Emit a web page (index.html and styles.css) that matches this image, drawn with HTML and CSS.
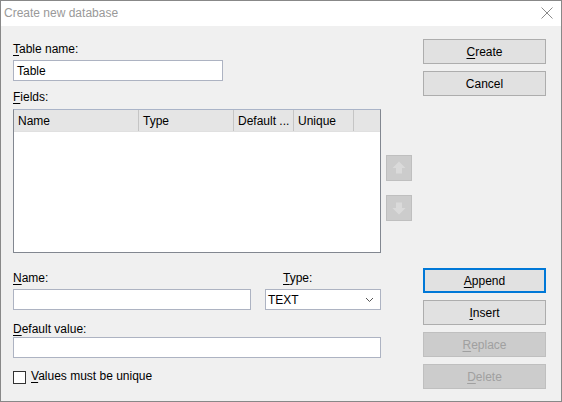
FILE: index.html
```html
<!DOCTYPE html>
<html>
<head>
<meta charset="utf-8">
<link rel="stylesheet" href="styles.css">
</head>
<body>
<div class="window">
  <div class="titlebar">
    <span class="title">Create new database</span>
    <svg class="close" width="12" height="12" viewBox="0 0 12 12"><path d="M0.5 0.5 L11.5 11.5 M11.5 0.5 L0.5 11.5" stroke="#8a8a8a" stroke-width="1" fill="none"/></svg>
  </div>
  <div class="body">
    <div class="left">
      <div class="lbl lbl-first"><u>T</u>able name:</div>
      <div class="input input-table">Table</div>
      <div class="lbl lbl-fields"><u>F</u>ields:</div>
      <div class="list-row">
        <div class="list">
          <div class="list-head">
            <div class="col c-name">Name</div>
            <div class="col c-type">Type</div>
            <div class="col c-def">Default ...</div>
            <div class="col c-uniq">Unique</div>
            <div class="col c-fill"></div>
          </div>
        </div>
        <div class="arrows">
          <div class="arrow-btn">
            <svg width="24" height="24" viewBox="0 0 24 24"><polygon points="12,5.5 18.5,12 15,12 15,17.5 9,17.5 9,12 5.5,12" fill="#dadada"/></svg>
          </div>
          <div class="arrow-btn arrow-down">
            <svg width="24" height="24" viewBox="0 0 24 24"><polygon points="12,18.5 18.5,12 15,12 15,6.5 9,6.5 9,12 5.5,12" fill="#dadada"/></svg>
          </div>
        </div>
      </div>
      <div class="field-row">
        <div class="field field-name">
          <div class="lbl"><u>N</u>ame:</div>
          <div class="input input-name"></div>
        </div>
        <div class="field field-type">
          <div class="lbl lbl-type"><u>T</u>ype:</div>
          <div class="select">
            <span>TEXT</span>
            <svg class="chev" width="9" height="6" viewBox="0 0 9 6"><path d="M1 1 L4.5 4.5 L8 1" stroke="#555" stroke-width="1" fill="none"/></svg>
          </div>
        </div>
      </div>
      <div class="lbl lbl-default"><u>D</u>efault value:</div>
      <div class="input input-default"></div>
      <div class="check-row">
        <span class="checkbox"></span>
        <span class="check-label"><u>V</u>alues must be unique</span>
      </div>
    </div>
    <div class="right">
      <div class="btn"><u>C</u>reate</div>
      <div class="btn">Cancel</div>
      <div class="btn btn-default btn-append"><u>A</u>ppend</div>
      <div class="btn"><u>I</u>nsert</div>
      <div class="btn btn-disabled"><u>R</u>eplace</div>
      <div class="btn btn-disabled"><u>D</u>elete</div>
    </div>
  </div>
</div>
</body>
</html>
```

FILE: styles.css
```css
* { box-sizing: border-box; }
html, body { margin: 0; padding: 0; }
body {
  font-family: "Liberation Sans", Arial, sans-serif;
  font-size: 12px;
  color: #000;
  background: #fff;
}
u { text-decoration: underline; text-underline-offset: 2px; text-decoration-thickness: 1px; }

.window {
  width: 562px;
  height: 402px;
  border: 1px solid #888;
  background: #f0f0f0;
  display: flex;
  flex-direction: column;
}
.titlebar {
  height: 25px;
  background: #fff;
  display: flex;
  align-items: center;
  justify-content: space-between;
  padding: 0 8px 1px 3px;
}
.title { color: #999; line-height: 15px; }
.close { display: block; }

.body { display: flex; flex: 1; }
.left {
  width: 412px;
  padding: 16px 0 0 12px;
  display: flex;
  flex-direction: column;
}
.lbl { line-height: 15px; height: 15px; white-space: nowrap; }
.input {
  height: 21px;
  background: #fff;
  border: 1px solid #adb3c2;
  padding: 1px 0 0 3px;
  line-height: 19px;
}
.input-table { width: 210px; margin-top: 3px; }
.lbl-fields { margin-top: 9px; }

.list-row { display: flex; margin-top: 4px; }
.list {
  width: 368px;
  height: 144px;
  background: #fff;
  border: 1px solid #828790;
  border-top-color: #aab4c8;
}
.list-head {
  display: flex;
  height: 22px;
  background: #e5e5e5;
  border-bottom: 1px solid #e0e0e0;
}
.col {
  line-height: 22px;
  padding-left: 4px;
  border-right: 1px solid #c5c5c5;
  white-space: nowrap;
  overflow: hidden;
}
.c-name { width: 125px; }
.c-type { width: 95px; }
.c-def { width: 60px; }
.c-uniq { width: 60px; }
.c-fill { flex: 1; border-right: none; }

.arrows {
  display: flex;
  flex-direction: column;
  margin-left: 5px;
  padding-top: 46px;
  gap: 14px;
}
.arrow-btn {
  width: 26px;
  height: 26px;
  background: #cccccc;
  border: 1px solid #bfbfbf;
}
.arrow-btn svg { display: block; }

.field-row { display: flex; margin-top: 18px; gap: 14px; }
.field { display: flex; flex-direction: column; }
.field .input, .field .select { margin-top: 3px; }
.input-name { width: 238px; }
.lbl-type { padding-left: 18px; }
.select {
  width: 116px;
  height: 21px;
  background: #fff;
  border: 1px solid #adb3c2;
  padding: 0 6px 0 2px;
  display: flex;
  align-items: center;
  justify-content: space-between;
}
.chev { display: block; }

.lbl-default { margin-top: 12px; }
.input-default { width: 368px; }

.check-row { display: flex; align-items: center; margin-top: 12px; }
.checkbox {
  width: 13px;
  height: 13px;
  border: 1px solid #333;
  background: #fff;
}
.check-label { margin-left: 5px; line-height: 15px; position: relative; top: -1px; }

.right {
  width: 123px;
  margin-left: 10px;
  padding-top: 13px;
  display: flex;
  flex-direction: column;
  gap: 7px;
}
.btn {
  height: 25px;
  background: #e1e1e1;
  border: 1px solid #adadad;
  text-align: center;
  line-height: 24px;
}
.btn-default { border: 2px solid #0078d7; line-height: 22px; }
.btn-append { margin-top: 165px; }
.btn-disabled { background: #cccccc; border-color: #bfbfbf; color: #a0a0a0; }
```
